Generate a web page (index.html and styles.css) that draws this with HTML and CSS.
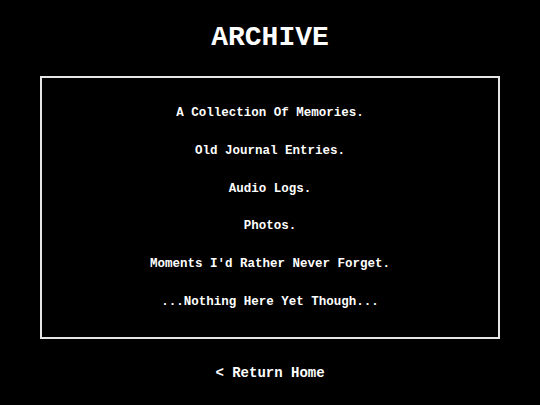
FILE: index.html
```html
<!DOCTYPE html>
<html lang="en">
<head>
<meta charset="UTF-8">
<meta name="viewport" content="width=device-width, initial-scale=1.0">
<title>Archive</title>
<link rel="stylesheet" href="styles.css">
</head>
<body>
    <div class="page">
        <h1>ARCHIVE</h1>
        <div class="archive-box">
            <p>A Collection Of Memories.</p>
            <p>Old Journal Entries.</p>
            <p>Audio Logs.</p>
            <p>Photos.</p>
            <p>Moments I'd Rather Never Forget.</p>
            <p>...Nothing Here Yet Though...</p>
        </div>
        <a class="home-link" href="index.html">&lt; Return Home</a>
    </div>
</body>
</html>
```

FILE: styles.css
```css
body {
    font-family: "Liberation Mono", "DejaVu Sans Mono", monospace;
    background-color: #000;
    color: #fff;
    margin: 0;
    padding: 0;
}
.page {
    display: flex;
    flex-direction: column;
    align-items: center;
    padding: 24px 40px 0;
}
h1 {
    font-size: 28px;
    line-height: 28px;
    font-weight: bold;
    margin: 0 0 24px;
}
.archive-box {
    box-sizing: border-box;
    width: 100%;
    border: 2px solid #e6e6e6;
    padding: 17px 0 15px;
    text-align: center;
}
.archive-box p {
    margin: 0;
    font-size: 12.5px;
    font-weight: bold;
    line-height: 37.8px;
}
.home-link {
    margin-top: 24px;
    color: #fff;
    text-decoration: none;
    font-size: 14px;
    font-weight: bold;
    line-height: 20px;
}
```
